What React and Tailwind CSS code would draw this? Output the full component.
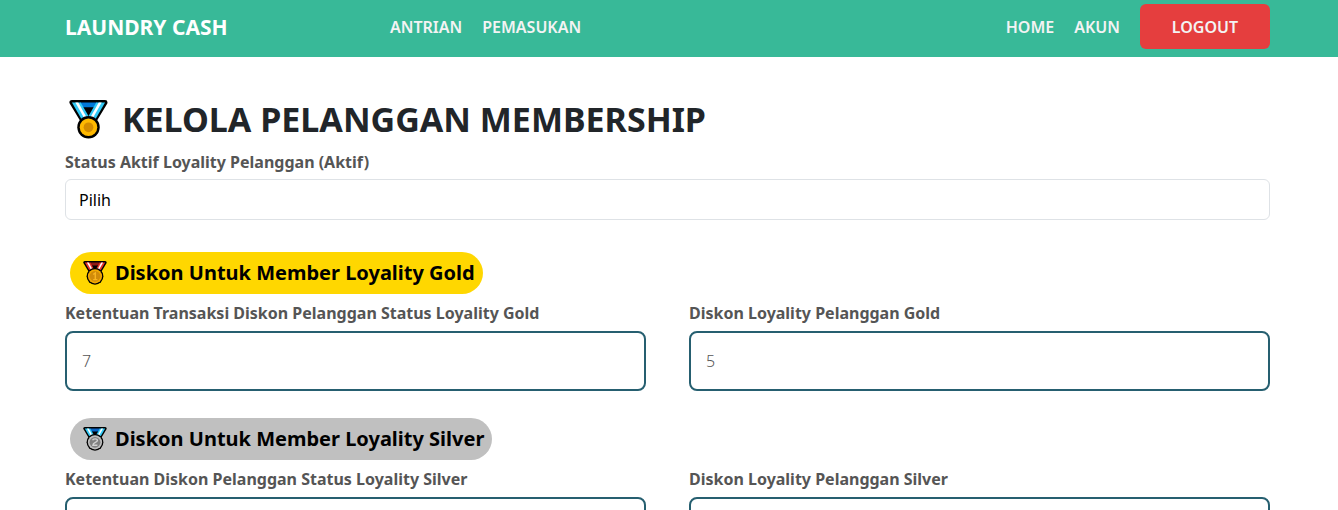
import { useState } from 'react';

const tiers = [
  {
    id: 'gold',
    title: 'Diskon Untuk Member Loyality Gold',
    badge: 'bg-[#ffd700]',
    rank: '1',
    ribbon: { base: '#8e1a14', strap: '#e8352b', stripe: '#ffffff' },
    coin: { outer: '#f2a900', inner: '#d18b0a', mark: '#f9b420' },
    fields: [
      { id: 'gold-rule', label: 'Ketentuan Transaksi Diskon Pelanggan Status Loyality Gold', placeholder: '7' },
      { id: 'gold-discount', label: 'Diskon Loyality Pelanggan Gold', placeholder: '5' },
    ],
  },
  {
    id: 'silver',
    title: 'Diskon Untuk Member Loyality Silver',
    badge: 'bg-[#c0c0c0]',
    rank: '2',
    ribbon: { base: '#0a63c4', strap: '#31c9f5', stripe: '#ffffff' },
    coin: { outer: '#bdbdbd', inner: '#808080', mark: '#d0d0d0' },
    fields: [
      { id: 'silver-rule', label: 'Ketentuan Diskon Pelanggan Status Loyality Silver', placeholder: '' },
      { id: 'silver-discount', label: 'Diskon Loyality Pelanggan Silver', placeholder: '' },
    ],
  },
];

const Ribbon = ({ base, strap, stripe }) => (
  <>
    <path d="M3 2.500h34L24 24h-8z" fill="#000" stroke="#000" strokeWidth="5" strokeLinejoin="round" />
    <path d="M11 2.500h18l-3 5H14z" fill={base} />
    <path d="M3 2.500h9L22 20l-3 5h-3z" fill={strap} />
    <path d="M37 2.500h-9L18 20l3 5h3z" fill={strap} />
    <path d="M6.500 2.500h3L19 19.500 17.500 22z" fill={stripe} />
    <path d="M33.500 2.500h-3L21 19.500l1.500 2.500z" fill={stripe} />
  </>
);

const Medal = ({ className, ribbon, coin, rank }) => (
  <svg viewBox="0 0 40 40" className={className} aria-hidden="true">
    <Ribbon {...ribbon} />
    {!rank && (
      <>
        <circle cx="20" cy="28" r="11.500" fill="#000" />
        <circle cx="20" cy="28" r="9" fill={coin.outer} />
        <circle cx="20" cy="28" r="5" fill={coin.inner} />
      </>
    )}
    {rank && (
      <>
        <circle cx="20" cy="25.500" r="14" fill="#000" />
        <circle cx="20" cy="25.500" r="11.800" fill={coin.outer} />
        <circle cx="20" cy="25.500" r="9" fill={coin.inner} />
      </>
    )}
    {rank === '1' && (
      <path d="M17 22.500l3.500-2.500v11m-3.500 0h7" fill="none" stroke={coin.mark} strokeWidth="2.400" />
    )}
    {rank === '2' && (
      <path d="M16 22c1-3 8-3 8 0.500 0 3.500-7.500 3-7.500 8H24" fill="none" stroke={coin.mark} strokeWidth="2.400" />
    )}
  </svg>
);

const Navbar = () => (
  <nav className="bg-[#38b998] text-[#f3f3f3] font-semibold">
    <div className="pl-[65px] pr-[68px] h-[57px] flex items-center pb-1">
      <a href="#" className="w-[325px] text-[21px] leading-8 font-bold text-white">LAUNDRY CASH</a>
      <div className="flex gap-5">
        <a href="#antrian">ANTRIAN</a>
        <a href="#pemasukan">PEMASUKAN</a>
      </div>
      <div className="ml-auto flex items-center gap-5">
        <a href="#home">HOME</a>
        <a href="#akun">AKUN</a>
        <button type="button" className="w-[130px] h-[45px] rounded-md bg-[#e53e3e]">LOGOUT</button>
      </div>
    </div>
  </nav>
);

const Field = ({ id, label, placeholder }) => (
  <div>
    <label htmlFor={id} className="block mb-1.5 font-bold text-[#555]">{label}</label>
    <input
      id={id}
      type="text"
      placeholder={placeholder}
      className="block w-full h-[60px] px-[15px] rounded-lg border-2 border-[#265f70] bg-white font-light placeholder:text-[#555]"
    />
  </div>
);

const TierSection = ({ tier }) => (
  <section>
    <h2 className={`ml-[5px] inline-flex items-center gap-2 h-[42px] pl-[13px] pr-2 rounded-full text-xl font-bold text-black ${tier.badge}`}>
      <Medal className="size-6" ribbon={tier.ribbon} coin={tier.coin} rank={tier.rank} />
      {tier.title}
    </h2>
    <div className="mt-[7px] grid grid-cols-2 gap-x-[43px]">
      {tier.fields.map((field) => (
        <Field key={field.id} {...field} />
      ))}
    </div>
  </section>
);

export default function App() {
  const [status, setStatus] = useState('');

  return (
    <div className="h-screen overflow-hidden bg-white text-base font-['Noto_Sans',sans-serif]">
      <Navbar />
      <main className="pl-[65px] pr-[68px] pt-10">
        <h1 className="flex items-center gap-[14px] pl-1 h-[45px] text-[34px] font-bold text-[#212529]">
          <Medal
            className="size-[39px]"
            ribbon={{ base: '#0078d7', strap: '#31c9f5', stripe: '#ffffff' }}
            coin={{ outer: '#ffb900', inner: '#d48c00' }}
          />
          KELOLA PELANGGAN MEMBERSHIP
        </h1>
        <label htmlFor="status" className="block mt-2 mb-[5px] font-bold text-[#555]">
          Status Aktif Loyality Pelanggan (Aktif)
        </label>
        <select
          id="status"
          value={status}
          onChange={(e) => setStatus(e.target.value)}
          className="block w-full h-[41px] px-[13px] appearance-none rounded-md border border-[#dee2e6] bg-white text-black"
        >
          <option value="">Pilih</option>
          <option value="aktif">Aktif</option>
          <option value="nonaktif">Tidak Aktif</option>
        </select>
        <div className="mt-8 space-y-[27px]">
          {tiers.map((tier) => (
            <TierSection key={tier.id} tier={tier} />
          ))}
        </div>
      </main>
    </div>
  );
}
